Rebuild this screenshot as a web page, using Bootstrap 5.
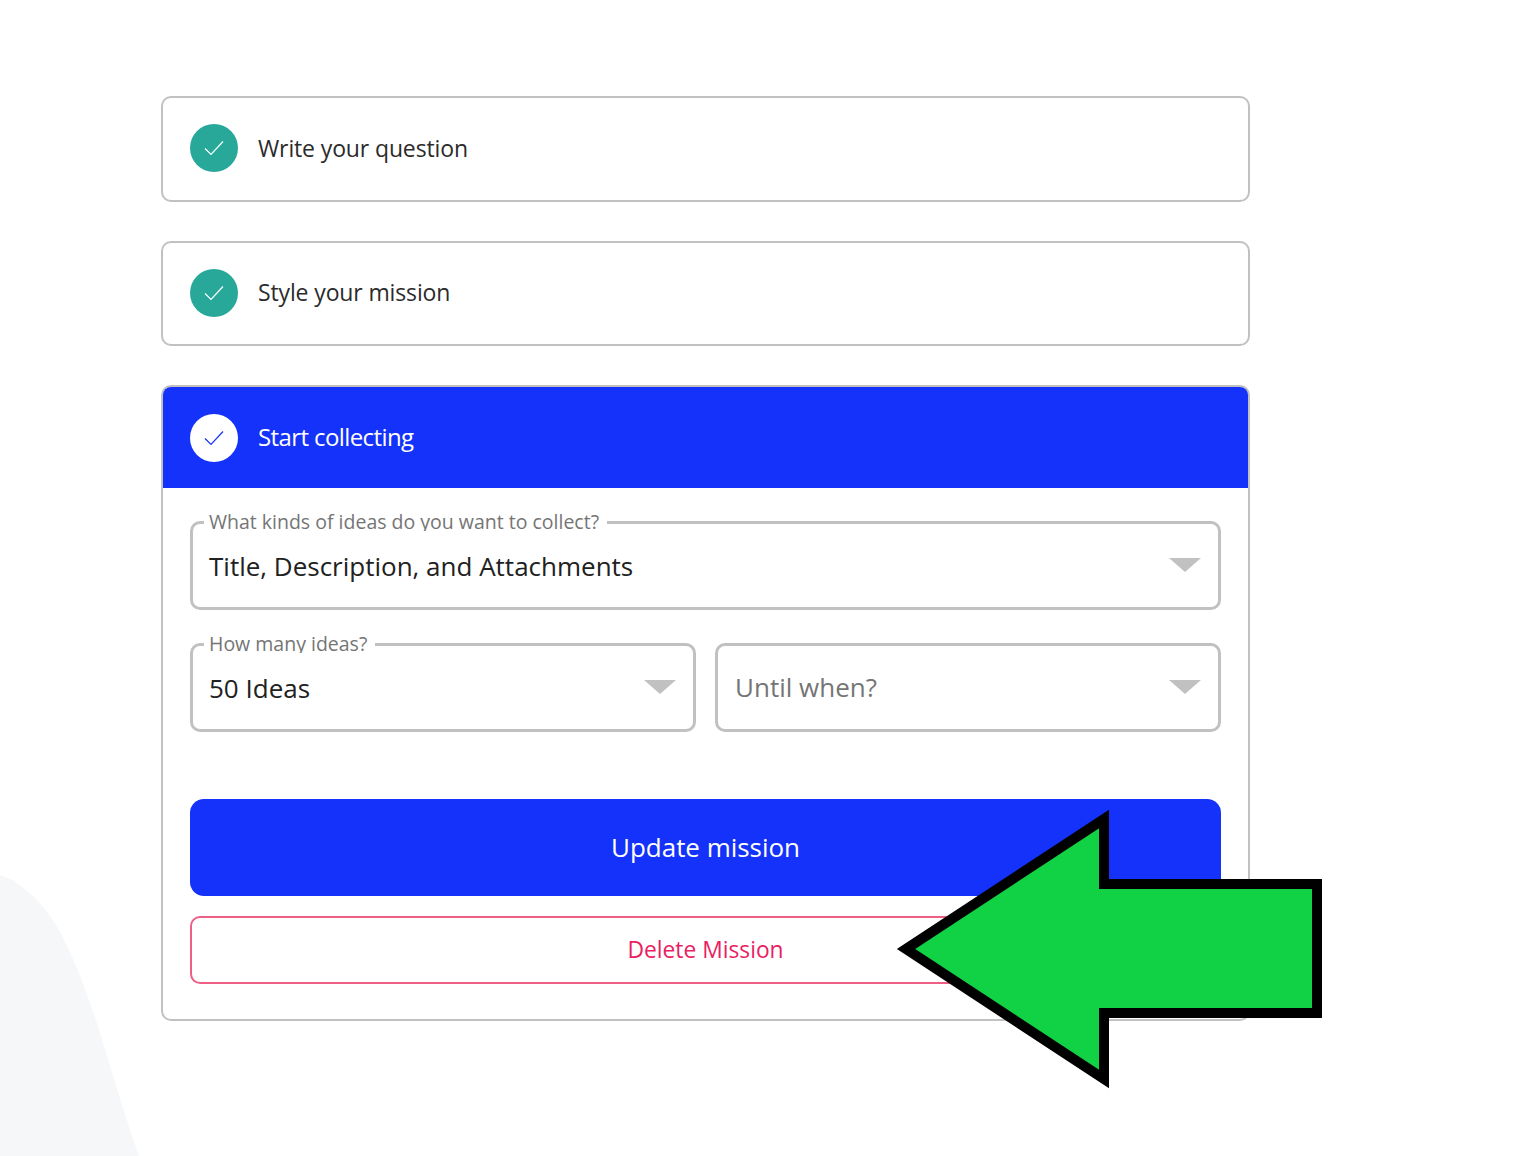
<!DOCTYPE html>
<html lang="en"><head><meta charset="utf-8"><title>Mission</title>
<link rel="stylesheet" href="https://cdn.jsdelivr.net/npm/bootstrap@5.3.0/dist/css/bootstrap.min.css">
<style>
html,body{height:1156px;overflow:hidden;background:#fff}
body{font-family:"Open Sans",sans-serif;color:#212121;position:relative}
.decor-blob{position:absolute;left:0;top:860px;width:200px;height:296px}
.pointer-arrow{position:absolute;left:880px;top:790px;width:460px;height:310px}
.step-wrap{width:1089px;margin:96px 0 0 161px;position:relative}
.step-box{border:2px solid #c1c1c1;border-radius:10px;background:#fff;margin-bottom:39px;overflow:hidden}
.step-head{height:101px;padding-left:27px;padding-bottom:1px;display:flex;align-items:center;gap:20px;font-size:23px;line-height:1;letter-spacing:-.13px;color:#2b2b2b}
.step-head.first-head{height:102px;padding-bottom:2px}
.step-head.active{padding-bottom:0;background:#1432f9;color:#fff;font-size:24px;letter-spacing:-.6px}
.step-text{margin-bottom:1px}
.first-head .step-text{margin-bottom:0}
.active .step-text{margin-bottom:2px}
.step-dot{width:48px;height:48px;border-radius:50%;background:#27a899;display:flex;align-items:center;justify-content:center;flex:none}
.active .step-dot{background:#fff}
.step-body{padding:33px 27px 35px}
.pick-field{position:relative;height:89px;border:3px solid #c1c1c1;border-radius:10px;background:#fff;display:flex;align-items:center;padding:2px 16px 0;font-size:26px;color:#212121}
.pick-field.blank{color:#757575;padding:0 16px 0 17px}
.pick-label{position:absolute;left:11px;top:-14px;height:21px;overflow:hidden;padding:0 8px 0 5px;background:#fff;font-size:19.5px;line-height:23px;color:#757575}
.pick-caret{position:absolute;right:17px;top:34px;width:32px;height:14px}
.pair-row{margin-top:33px}
.pair-row>div{width:506px}
.main-btn{display:block;width:100%;height:97px;margin-top:67px;border-radius:14px;background:#1432f9;border:0;color:#fff;font-size:26px;letter-spacing:-.04px}
.main-btn:hover{background:#1432f9;color:#fff}
.del-btn{display:block;width:100%;height:68px;margin-top:20px;border-radius:10px;border:2px solid #ef5f85;background:#fff;color:#e91e63;font-size:22.8px;padding-top:6px;padding-bottom:6px}
.del-btn:hover{background:#fff;color:#e91e63;border-color:#ef5f85}
</style></head>
<body>
<svg class="decor-blob" viewBox="0 0 200 296" aria-hidden="true"><path d="M0 15C15 19 33 33 50 56C67 80 85 125 100 173C115 222 125 256 139 296L0 296Z" fill="#f6f7f9"/></svg>
<main class="step-wrap">
  <section class="step-box"><div class="step-head first-head"><span class="step-dot"><svg width="20" height="16" viewBox="0 0 20 16"><path d="M1 8.5 7 14.5 19 1.5" fill="none" stroke="#fff" stroke-width="1.2"/></svg></span><span class="step-text">Write your question</span></div></section>
  <section class="step-box"><div class="step-head"><span class="step-dot"><svg width="20" height="16" viewBox="0 0 20 16"><path d="M1 8.5 7 14.5 19 1.5" fill="none" stroke="#fff" stroke-width="1.2"/></svg></span><span class="step-text">Style your mission</span></div></section>
  <section class="step-box">
    <div class="step-head active"><span class="step-dot"><svg width="20" height="16" viewBox="0 0 20 16"><path d="M1 8.5 7 14.5 19 1.5" fill="none" stroke="#1432f9" stroke-width="1.2"/></svg></span><span class="step-text">Start collecting</span></div>
    <div class="step-body">
      <div class="pick-field"><span class="pick-label">What kinds of ideas do you want to collect?</span>Title, Description, and Attachments<svg class="pick-caret" viewBox="0 0 32 14"><path d="M0 0H32L16 14Z" fill="#c1c1c1"/></svg></div>
      <div class="pair-row d-flex justify-content-between">
        <div class="pick-field"><span class="pick-label">How many ideas?</span>50 Ideas<svg class="pick-caret" viewBox="0 0 32 14"><path d="M0 0H32L16 14Z" fill="#c1c1c1"/></svg></div>
        <div class="pick-field blank">Until when?<svg class="pick-caret" viewBox="0 0 32 14"><path d="M0 0H32L16 14Z" fill="#c1c1c1"/></svg></div>
      </div>
      <button class="btn main-btn" type="button">Update mission</button>
      <button class="btn del-btn" type="button">Delete Mission</button>
    </div>
  </section>
</main>
<svg class="pointer-arrow" viewBox="880 790 460 310" aria-hidden="true"><path d="M906 949 1104 819V884H1317V1013H1104V1079Z" fill="#11d145" stroke="#000" stroke-width="10" stroke-miterlimit="10"/></svg>
<script src="https://cdn.jsdelivr.net/npm/bootstrap@5.3.0/dist/js/bootstrap.bundle.min.js"></script>
</body></html>
